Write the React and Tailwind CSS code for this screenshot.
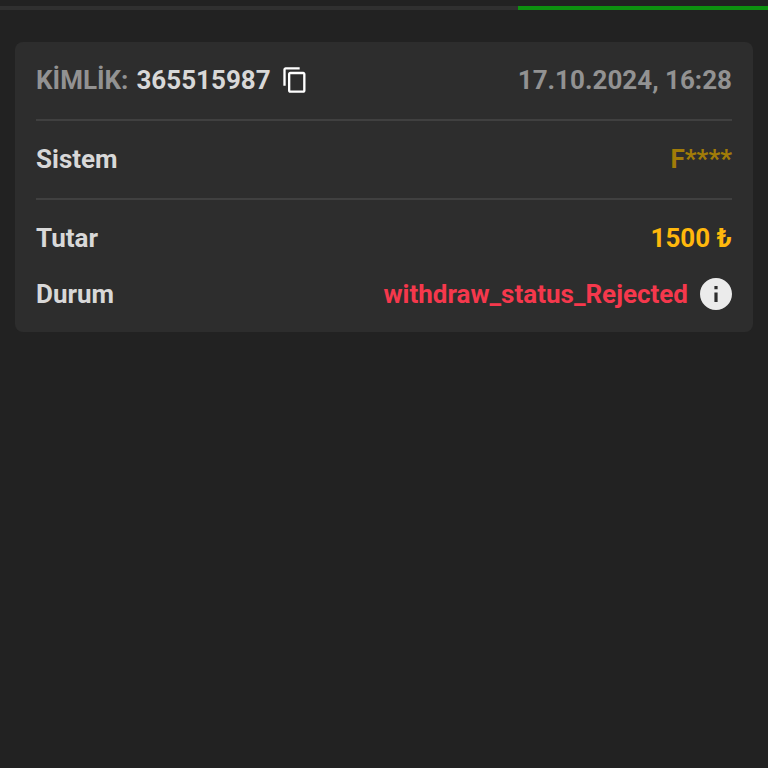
import { MdContentCopy } from 'react-icons/md'

function InfoIcon({ className }) {
  return (
    <svg viewBox="2 2 20 20" fill="currentColor" aria-hidden="true" className={className}>
      <path d="M12 2C6.48 2 2 6.48 2 12s4.48 10 10 10 10-4.48 10-10S17.52 2 12 2zm1 15h-2v-6h2v6zm0-8h-2V7h2v2z" />
    </svg>
  )
}

function Row({ label, children }) {
  return (
    <div className="flex items-center justify-between">
      <dt className="text-[#d8d8d8]">{label}</dt>
      <dd className="flex items-center gap-3">{children}</dd>
    </div>
  )
}

/**
 * TransactionCard Component
 * Shows id, date, payment system, amount and status of one withdrawal
 */
function TransactionCard({ transaction }) {
  return (
    <article className="mx-[15px] mt-8 rounded-lg bg-[#2d2d2d] px-[21px] py-[22px]">
      <header className="flex items-center justify-between pb-[23px]">
        <div className="flex items-center gap-2">
          <span className="text-[#929292]">KİMLİK:</span>
          <span className="text-[#d8d8d8]">{transaction.id}</span>
          <button type="button" aria-label="Kopyala" className="ml-0.5 text-white">
            <MdContentCopy className="size-7" />
          </button>
        </div>
        <time className="text-[#929292]">{transaction.date}</time>
      </header>
      <dl>
        <div className="border-y-2 border-[#404040] pt-[22px] pb-[23px]">
          <Row label="Sistem">
            <span className="text-[#a17c08]">{transaction.system}</span>
          </Row>
        </div>
        <div className="flex flex-col gap-6 pt-[22px]">
          <Row label="Tutar">
            <span className="text-[#ffb80c]">{transaction.amount}</span>
          </Row>
          <Row label="Durum">
            <span className="text-[#f5384c]">{transaction.status}</span>
            <button type="button" aria-label="Bilgi" className="text-[#ebebeb]">
              <InfoIcon className="size-8" />
            </button>
          </Row>
        </div>
      </dl>
    </article>
  )
}

const transaction = {
  id: '365515987',
  date: '17.10.2024, 16:28',
  system: 'F****',
  amount: '1500 ₺',
  status: 'withdraw_status_Rejected',
}

export default function App() {
  return (
    <main className="min-h-screen bg-[#222222] pt-1.5 font-[Roboto,sans-serif] text-[26px] leading-8 font-bold">
      <div className="flex h-1 bg-[#303030]">
        <div className="ml-auto w-[32.6%] bg-[#0d9110]" />
      </div>
      <TransactionCard transaction={transaction} />
    </main>
  )
}
